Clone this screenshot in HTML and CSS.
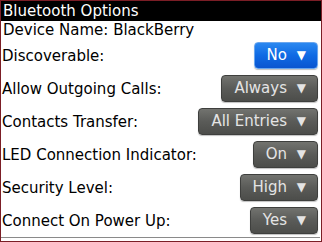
FILE: index.html
```html
<!DOCTYPE html>
<html lang="en">
<head>
  <meta charset="UTF-8">
  <title>Bluetooth Options</title>
  <link rel="stylesheet" href="styles.css">
</head>
<body>
<div class="screen">
  <div class="title-bar">Bluetooth Options</div>
  <div class="device-name">Device Name: BlackBerry</div>
  <div class="options">
    <div class="option">
      <span class="label">Discoverable:</span>
      <span class="choice focused">No <span class="arrow">&#9660;</span></span>
    </div>
    <div class="option">
      <span class="label">Allow Outgoing Calls:</span>
      <span class="choice">Always <span class="arrow">&#9660;</span></span>
    </div>
    <div class="option">
      <span class="label">Contacts Transfer:</span>
      <span class="choice">All Entries <span class="arrow">&#9660;</span></span>
    </div>
    <div class="option">
      <span class="label">LED Connection Indicator:</span>
      <span class="choice">On <span class="arrow">&#9660;</span></span>
    </div>
    <div class="option">
      <span class="label">Security Level:</span>
      <span class="choice">High <span class="arrow">&#9660;</span></span>
    </div>
    <div class="option">
      <span class="label">Connect On Power Up:</span>
      <span class="choice">Yes <span class="arrow">&#9660;</span></span>
    </div>
  </div>
</div>
</body>
</html>
```

FILE: styles.css
```css
html, body {
  margin: 0;
  padding: 0;
}

body {
  font-family: "DejaVu Sans", sans-serif;
  font-size: 15px;
  color: #000;
  background: #fff;
}

.screen {
  width: 322px;
  height: 242px;
  box-sizing: border-box;
  border: 1px solid #7b1e26;
  display: flex;
  flex-direction: column;
  overflow: hidden;
}

.title-bar {
  height: 20px;
  line-height: 20px;
  background: #000;
  color: #fff;
  padding-left: 2px;
  font-size: 15px;
}

.device-name {
  height: 18px;
  line-height: 18px;
  padding-left: 2px;
}

.options {
  border-bottom: 1px solid #8a8a8a;
  margin-right: 1px;
}

.option {
  height: 33px;
  display: flex;
  align-items: center;
  justify-content: space-between;
  padding: 0 2px 0 1px;
}

.choice {
  height: 25px;
  line-height: 25px;
  padding: 0 11px 0 12px;
  border-radius: 4px;
  color: #e4e4e4;
  background: linear-gradient(#72736f, #5a5b58 50%, #4c4d4a);
  border: 1px solid #3e3f3d;
  box-shadow: 0 1px 1px rgba(0, 0, 0, 0.25);
}

.choice.focused {
  color: #fff;
  background: linear-gradient(#2b88f0, #0f6ae4 50%, #0a55d0);
  border-color: #6aa6ee;
}

.arrow {
  font-size: 12px;
  margin-left: 5px;
  position: relative;
  top: -1px;
}
```
